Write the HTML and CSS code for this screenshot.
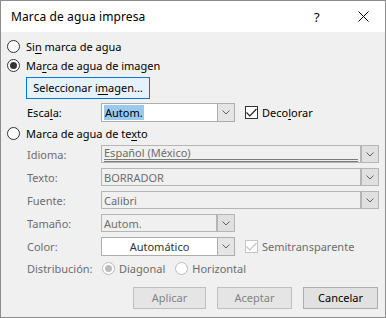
FILE: index.html
```html
<!DOCTYPE html>
<html lang="es">
<head>
<meta charset="utf-8">
<title>Marca de agua impresa</title>
<link rel="stylesheet" href="styles.css">
</head>
<body>
<div class="dialog">
  <div class="titlebar">
    <span class="title">Marca de agua impresa</span>
    <span class="help">?</span>
    <span class="close"><svg width="11" height="11" viewBox="0 0 11 11"><path d="M0.5 0.5L10.5 10.5M10.5 0.5L0.5 10.5" stroke="#000" stroke-width="1" fill="none"/></svg></span>
  </div>
  <div class="content">
    <div class="row opt r1"><span class="radio"></span><span class="lbl">Si<u>n</u> marca de agua</span></div>
    <div class="row opt r2"><span class="radio on"></span><span class="lbl">Ma<u>r</u>ca de agua de imagen</span></div>
    <div class="row r3"><button class="btn focus">Seleccionar i<u>m</u>agen...</button></div>
    <div class="row field r4">
      <span class="flabel">Esca<u>l</u>a:</span>
      <div class="combo short"><span class="ctext"><span class="sel">Autom.</span></span><span class="drop"><svg width="8" height="5" viewBox="0 0 8 5"><path d="M0.5 0.5L4 4L7.5 0.5" stroke="#606060" fill="none"/></svg></span></div>
      <span class="check on"><svg width="11" height="9" viewBox="0 0 11 9"><path d="M0.5 4.5L3.8 7.8L10.5 1" stroke="#222" stroke-width="1.2" fill="none"/></svg></span>
      <span class="clbl">Deco<u>l</u>orar</span>
    </div>
    <div class="row opt r5"><span class="radio"></span><span class="lbl">Marca de agua de te<u>x</u>to</span></div>
    <div class="row field r6">
      <span class="flabel dis">Idioma:</span>
      <div class="combo long dis"><span class="ctext lang"><span class="dbl">Español (México)</span></span><span class="drop"><svg width="8" height="5" viewBox="0 0 8 5"><path d="M0.5 0.5L4 4L7.5 0.5" stroke="#606060" fill="none"/></svg></span></div>
    </div>
    <div class="row field r7">
      <span class="flabel dis">Texto:</span>
      <div class="combo long dis"><span class="ctext">BORRADOR</span><span class="drop"><svg width="8" height="5" viewBox="0 0 8 5"><path d="M0.5 0.5L4 4L7.5 0.5" stroke="#606060" fill="none"/></svg></span></div>
    </div>
    <div class="row field r8">
      <span class="flabel dis">Fuente:</span>
      <div class="combo long dis"><span class="ctext">Calibri</span><span class="drop"><svg width="8" height="5" viewBox="0 0 8 5"><path d="M0.5 0.5L4 4L7.5 0.5" stroke="#606060" fill="none"/></svg></span></div>
    </div>
    <div class="row field r9">
      <span class="flabel dis">Tamaño:</span>
      <div class="combo short dis"><span class="ctext">Autom.</span><span class="drop"><svg width="8" height="5" viewBox="0 0 8 5"><path d="M0.5 0.5L4 4L7.5 0.5" stroke="#606060" fill="none"/></svg></span></div>
    </div>
    <div class="row field r10">
      <span class="flabel dis">Color:</span>
      <div class="combo short color"><span class="ctext center">Automático</span><span class="drop"><svg width="8" height="5" viewBox="0 0 8 5"><path d="M0.5 0.5L4 4L7.5 0.5" stroke="#606060" fill="none"/></svg></span></div>
      <span class="check dis"><svg width="11" height="9" viewBox="0 0 11 9"><path d="M0.5 4.5L3.8 7.8L10.5 1" stroke="#c4c4c4" stroke-width="1.2" fill="none"/></svg></span>
      <span class="clbl dis">Semitransparente</span>
    </div>
    <div class="row field r11">
      <span class="flabel dis">Distribución:</span>
      <span class="radio dis on"></span><span class="rlbl dis">Diagonal</span>
      <span class="radio dis second"></span><span class="rlbl dis">Horizontal</span>
    </div>
    <div class="row buttons">
      <button class="btn dis wide1">Aplicar</button>
      <button class="btn dis wide2">Aceptar</button>
      <button class="btn wide3">Cancelar</button>
    </div>
  </div>
</div>
</body>
</html>
```

FILE: styles.css
```css
html, body {
  margin: 0;
  padding: 0;
  background: #ffffff;
}
body {
  font-family: "Noto Sans", "Open Sans", sans-serif;
  font-size: 11px;
  color: #000;
}
u { text-decoration: underline; text-underline-offset: 2px; }
.dialog {
  width: 386px;
  height: 318px;
  box-sizing: border-box;
  border: 1px solid #8c8c8c;
  background: #f0f0f0;
  display: flex;
  flex-direction: column;
}
.titlebar {
  height: 31px;
  background: #ffffff;
  display: flex;
  align-items: center;
  padding-left: 10px;
  flex: none;
  font-size: 12px;
}
.title { flex: 1; padding-bottom: 1px; letter-spacing: 0.1px; }
.help { width: 12px; margin-right: 32px; font-size: 13px; }
.close { width: 11px; margin-right: 16px; display: flex; }
.content {
  padding-left: 6px;
  display: flex;
  flex-direction: column;
}
.row { display: flex; align-items: center; }
.opt { height: 15px; }
.r1 { margin-top: 7px; }
.r2 { margin-top: 4px; }
.r3 { margin-top: 4px; padding-left: 19px; }
.r4 { margin-top: 4px; }
.r5 { margin-top: 4px; }
.r6 { margin-top: 4px; }
.r7, .r8, .r9, .r10 { margin-top: 5px; }
.r11 { margin-top: 5px; height: 15px; }
.buttons { margin-top: 11px; justify-content: flex-end; padding-right: 7px; gap: 11px; }
.radio {
  width: 13px;
  height: 13px;
  box-sizing: border-box;
  border: 1px solid #333;
  border-radius: 50%;
  background: #fff;
  display: flex;
  align-items: center;
  justify-content: center;
  flex: none;
}
.radio.on::after {
  content: "";
  width: 7px;
  height: 7px;
  border-radius: 50%;
  background: #333;
}
.radio.dis { border-color: #bcbcbc; }
.radio.dis.on::after { background: #bcbcbc; }
.lbl { margin-left: 6px; }
.btn {
  font-family: inherit;
  font-size: 11px;
  height: 22px;
  box-sizing: border-box;
  border: 1px solid #adadad;
  background: #e1e1e1;
  color: #000;
  padding: 0;
  margin: 0;
  line-height: 18px;
}
.btn.focus {
  width: 124px;
  border-color: #0078d7;
  background: #e5f1fb;
}
.btn.dis { color: #838383; border-color: #bfbfbf; background: #e5e5e5; }
.wide1 { width: 73px; }
.wide2 { width: 75px; }
.wide3 { width: 75px; }
.flabel { width: 74px; margin-left: 20px; flex: none; }
.dis { color: #6d6d6d; }
.combo {
  height: 19px;
  box-sizing: border-box;
  border: 1px solid #adadad;
  background: #fff;
  display: flex;
  flex: none;
}
.combo.long { width: 278px; height: 18px; }
.combo.short { width: 134px; }
.r9 .combo { height: 18px; }
.combo.dis { background: #f0f0f0; border-color: #b5b5b5; }
.ctext {
  flex: 1;
  display: flex;
  align-items: center;
  padding-left: 2px;
  overflow: hidden;
  white-space: nowrap;
}
.ctext.lang { overflow: visible; align-items: flex-end; }
.ctext.center { justify-content: center; padding-left: 0; color: #333; }
.sel { background: #99c9ef; padding: 0 1px; line-height: 15px; }
.dbl {
  flex: 1;
  border-bottom: 3px double #7a7a7a;
  line-height: 13px;
  margin-right: 2px;
}
.drop {
  width: 16px;
  border-left: 1px solid #adadad;
  background: #e5e5e5;
  display: flex;
  align-items: center;
  justify-content: center;
  flex: none;
}
.combo.dis .drop { border-left: 2px solid #b5b5b5; background: #e0e0e0; }
.check {
  width: 13px;
  height: 13px;
  box-sizing: border-box;
  border: 1px solid #333;
  background: #fff;
  margin-left: 10px;
  display: flex;
  align-items: center;
  justify-content: center;
  flex: none;
}
.check.dis { border-color: #c4c4c4; }
.clbl { margin-left: 4px; }
.rlbl { margin-left: 4px; }
.r11 .radio { margin-left: 1px; }
.radio.second { margin-left: 10px; }
```
